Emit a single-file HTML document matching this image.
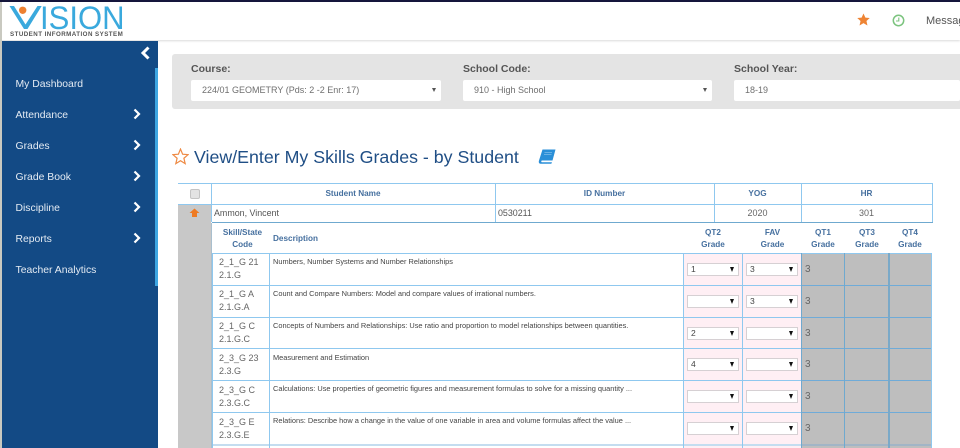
<!DOCTYPE html>
<html><head><meta charset="utf-8">
<style>
html,body{margin:0;padding:0;width:960px;height:448px;overflow:hidden;background:#fff;font-family:"Liberation Sans",sans-serif;color:#555}
.a{position:absolute}
.t{position:absolute;white-space:nowrap}
.nav{position:absolute;left:15.5px;color:#e4ebf3;font-size:10.4px;white-space:nowrap}
.h{position:absolute;background:#8fc8ef}
.g{position:absolute;left:801px;width:131px;height:1px;background:#6fabd8}
.v{position:absolute;background:#8fc8ef;width:1px}
.th{position:absolute;color:#46709f;font-weight:bold;font-size:8.2px;text-align:center;line-height:12px}
.sel{position:absolute;height:11px;background:#fff;border:1px solid #d6d0d3;font-size:8.5px;line-height:11px;color:#444;padding-left:3px;box-sizing:content-box;width:47px}
.sel:after{content:"";position:absolute;right:4px;top:3px;border-left:2.5px solid transparent;border-right:2.5px solid transparent;border-top:5px solid #111}
.code{position:absolute;left:219px;font-size:9px;line-height:13px;color:#666}
.desc{position:absolute;left:273px;font-size:7.4px;color:#444;white-space:nowrap}
.q{position:absolute;left:805px;font-size:10px;color:#666}
.lab{position:absolute;top:63px;font-size:10.5px;font-weight:bold;color:#555}
.box{position:absolute;top:80px;height:21px;background:#fff;border-radius:2px;font-size:9px;line-height:21px;color:#6f6f6f;box-sizing:border-box;padding-left:11px}
.arr{position:absolute;right:5px;top:8px;border-left:2.5px solid transparent;border-right:2.5px solid transparent;border-top:4px solid #555}
</style></head><body>
<div class="a" style="left:0;top:0;width:960px;height:2px;background:#15163c"></div>
<div class="a" style="left:0;top:2px;width:960px;height:38px;background:#fff;box-shadow:0 1px 2px rgba(0,0,0,.15)"></div>
<div class="a" style="left:0;top:2px;width:2px;height:446px;background:#c9c9c0"></div>

<!-- logo -->
<svg class="a" style="left:0;top:0" width="60" height="42" viewBox="0 0 60 42">
<path d="M9.5 6 L14 6 L25.5 24.5 L37.5 6 L41.7 6 L27.5 29 L24 29 Z" fill="#3aa9dd"/>
<circle cx="22.7" cy="10.3" r="3.7" fill="#ee8030"/>
</svg>
<div class="t" style="left:40px;top:0;font-size:32px;line-height:36px;color:#3aa9dd;transform-origin:0 0;transform:scaleX(.97)">ISION</div>
<div class="t" style="left:10px;top:31px;font-size:6.2px;font-weight:bold;color:#555;letter-spacing:.46px">STUDENT INFORMATION SYSTEM</div>

<!-- top right -->
<svg class="a" style="left:857px;top:13px" width="13" height="13" viewBox="0 0 24 24"><path d="M12 1 L15.5 8.5 L23.5 9.3 L17.5 14.8 L19.3 23 L12 18.8 L4.7 23 L6.5 14.8 L.5 9.3 L8.5 8.5 Z" fill="#ee8434"/></svg>
<svg class="a" style="left:892px;top:14px" width="13" height="13" viewBox="0 0 13 13"><circle cx="6.5" cy="6.5" r="5.2" fill="none" stroke="#7cc47f" stroke-width="1.5"/><path d="M6.8 3.5V7H4" fill="none" stroke="#7cc47f" stroke-width="1.1"/></svg>
<div class="t" style="left:926px;top:15px;font-size:11px;color:#555">Messag</div>

<!-- sidebar -->
<div class="a" style="left:2px;top:41px;width:156px;height:407px;background:#134a85"></div>
<div class="a" style="left:155px;top:68px;width:3px;height:218px;background:#3ea6e2"></div>
<svg class="a" style="left:140px;top:46px" width="11" height="14" viewBox="0 0 11 14"><path d="M8.5 1.5 L3 7 L8.5 12.5" fill="none" stroke="#fff" stroke-width="3"/></svg>
<div class="nav" style="top:79px">My Dashboard</div>
<div class="nav" style="top:110px">Attendance</div>
<div class="nav" style="top:141px">Grades</div>
<div class="nav" style="top:172px">Grade Book</div>
<div class="nav" style="top:203px">Discipline</div>
<div class="nav" style="top:234px">Reports</div>
<div class="nav" style="top:265px">Teacher Analytics</div>
<svg class="a" style="left:132px;top:108px" width="9" height="12" viewBox="0 0 9 12"><path d="M2.5 1.5 L7 6 L2.5 10.5" fill="none" stroke="#fff" stroke-width="2.2"/></svg>
<svg class="a" style="left:132px;top:139px" width="9" height="12" viewBox="0 0 9 12"><path d="M2.5 1.5 L7 6 L2.5 10.5" fill="none" stroke="#fff" stroke-width="2.2"/></svg>
<svg class="a" style="left:132px;top:170px" width="9" height="12" viewBox="0 0 9 12"><path d="M2.5 1.5 L7 6 L2.5 10.5" fill="none" stroke="#fff" stroke-width="2.2"/></svg>
<svg class="a" style="left:132px;top:201px" width="9" height="12" viewBox="0 0 9 12"><path d="M2.5 1.5 L7 6 L2.5 10.5" fill="none" stroke="#fff" stroke-width="2.2"/></svg>
<svg class="a" style="left:132px;top:232px" width="9" height="12" viewBox="0 0 9 12"><path d="M2.5 1.5 L7 6 L2.5 10.5" fill="none" stroke="#fff" stroke-width="2.2"/></svg>

<!-- filter panel -->
<div class="a" style="left:172px;top:54px;width:788px;height:55px;background:#e4e4e4;border-radius:3px 0 0 3px"></div>
<div class="lab" style="left:191px">Course:</div>
<div class="lab" style="left:463px">School Code:</div>
<div class="lab" style="left:734px">School Year:</div>
<div class="box" style="left:191px;width:250px">224/01 GEOMETRY (Pds: 2 -2 Enr: 17)<span class="arr"></span></div>
<div class="box" style="left:463px;width:249px">910 - High School<span class="arr"></span></div>
<div class="box" style="left:734px;width:226px">18-19</div>

<!-- title -->
<svg class="a" style="left:172px;top:148px" width="17" height="17" viewBox="0 0 24 24"><path d="M12 1.5 L15 8.8 L22.7 9.4 L16.8 14.5 L18.6 22 L12 18 L5.4 22 L7.2 14.5 L1.3 9.4 L9 8.8 Z" fill="none" stroke="#ee8a44" stroke-width="1.7"/></svg>
<div class="t" style="left:194px;top:146px;font-size:17.8px;line-height:22px;color:#1f4e85">View/Enter My Skills Grades - by Student</div>
<svg class="a" style="left:538px;top:149px" width="18" height="15" viewBox="0 0 18 15"><path d="M4.5 .5 H17.5 L14.5 11.5 H4 C3 11.5 3 13.3 4 13.3 H14 L13.3 14.7 H2.5 C.8 14.7 .5 13 1 11.5 Z" fill="#2a8fd8"/><path d="M6.5 3.5H14M6 5.5H13.5" stroke="#a8d4f2" stroke-width=".6"/></svg>

<!-- main table -->
<div class="a" style="left:178px;top:204px;width:33px;height:244px;background:#c8c8c8"></div>
<div class="h" style="left:178px;top:183px;width:755px;height:1px"></div>
<div class="h" style="left:178px;top:204px;width:755px;height:1px"></div>
<div class="a" style="left:212px;top:222px;width:721px;height:1px;background:#6fa9cf"></div>
<div class="v" style="left:211px;top:183px;height:39px"></div>
<div class="v" style="left:495px;top:183px;height:39px"></div>
<div class="v" style="left:714px;top:183px;height:39px"></div>
<div class="v" style="left:801px;top:183px;height:39px"></div>
<div class="v" style="left:932px;top:183px;height:39px"></div>
<div class="a" style="left:190px;top:189px;width:8px;height:8px;background:#e3e3e3;border:1px solid #c4c4c4;border-radius:2px"></div>
<div class="th" style="left:211px;top:188px;width:284px">Student Name</div>
<div class="th" style="left:495px;top:188px;width:219px">ID Number</div>
<div class="th" style="left:714px;top:188px;width:87px">YOG</div>
<div class="th" style="left:801px;top:188px;width:131px">HR</div>
<svg class="a" style="left:189px;top:208px" width="11" height="10" viewBox="0 0 11 10"><path d="M5.5 .5 L10.5 5 H8 V9 H3 V5 H.5 Z" fill="#ee7a22"/></svg>
<div class="t" style="left:214px;top:208px;font-size:8.9px;color:#555">Ammon, Vincent</div>
<div class="t" style="left:498px;top:208px;font-size:8.9px;color:#555">0530211</div>
<div class="t" style="left:714px;top:208px;width:87px;text-align:center;font-size:9px;color:#666">2020</div>
<div class="t" style="left:801px;top:208px;width:131px;text-align:center;font-size:9px;color:#666">301</div>

<!-- sub header -->
<div class="th" style="left:215px;top:227px;width:55px">Skill/State<br>Code</div>
<div class="th" style="left:273px;top:233px">Description</div>
<div class="th" style="left:684px;top:227px;width:58px">QT2<br>Grade</div>
<div class="th" style="left:743px;top:227px;width:59px">FAV<br>Grade</div>
<div class="th" style="left:801px;top:227px;width:44px">QT1<br>Grade</div>
<div class="th" style="left:845px;top:227px;width:44px">QT3<br>Grade</div>
<div class="th" style="left:888px;top:227px;width:44px">QT4<br>Grade</div>

<!-- cells background -->
<div class="a" style="left:684px;top:254px;width:117px;height:194px;background:#ffeff4"></div>
<div class="a" style="left:801px;top:254px;width:131px;height:194px;background:#bebebe"></div>

<!-- grid -->
<div class="h" style="left:212px;top:253px;width:720px;height:1px"></div>
<div class="h" style="left:212px;top:285px;width:720px;height:1px"></div>
<div class="h" style="left:212px;top:317px;width:720px;height:1px"></div>
<div class="h" style="left:212px;top:348px;width:720px;height:1px"></div>
<div class="h" style="left:212px;top:380px;width:720px;height:1px"></div>
<div class="h" style="left:212px;top:412px;width:720px;height:1px"></div>
<div class="g" style="top:285px"></div>
<div class="g" style="top:317px"></div>
<div class="g" style="top:348px"></div>
<div class="g" style="top:380px"></div>
<div class="g" style="top:412px"></div>
<div class="h" style="left:212px;top:444px;width:589px;height:2px;background:#c4ddf0"></div>
<div class="h" style="left:801px;top:444px;width:131px;height:2px;background:#a2b5c6"></div>
<div class="a" style="left:211px;top:223px;width:1px;height:225px;background:#a9bfce"></div>
<div class="v" style="left:212px;top:253px;height:195px"></div>
<div class="v" style="left:269px;top:253px;height:195px"></div>
<div class="v" style="left:683px;top:253px;height:195px"></div>
<div class="v" style="left:742px;top:253px;height:195px"></div>
<div class="v" style="left:801px;top:253px;height:195px;background:#6fa9cf"></div>
<div class="v" style="left:844px;top:253px;height:195px;background:#6fa9cf"></div>
<div class="v" style="left:888px;top:253px;height:195px;width:2px;background:#7aa9c8"></div>
<div class="v" style="left:931px;top:253px;height:195px"></div>

<!-- rows -->
<div class="code" style="top:256px">2_1_G 21<br>2.1.G</div>
<div class="desc" style="top:257px">Numbers, Number Systems and Number Relationships</div>
<div class="sel" style="left:687px;top:263px">1</div><div class="sel" style="left:746px;top:263px">3</div><div class="q" style="top:264px">3</div>

<div class="code" style="top:288px">2_1_G A<br>2.1.G.A</div>
<div class="desc" style="top:289px">Count and Compare Numbers: Model and compare values of irrational numbers.</div>
<div class="sel" style="left:687px;top:295px"></div><div class="sel" style="left:746px;top:295px">3</div><div class="q" style="top:296px">3</div>

<div class="code" style="top:320px">2_1_G C<br>2.1.G.C</div>
<div class="desc" style="top:321px">Concepts of Numbers and Relationships: Use ratio and proportion to model relationships between quantities.</div>
<div class="sel" style="left:687px;top:327px">2</div><div class="sel" style="left:746px;top:327px"></div><div class="q" style="top:328px">3</div>

<div class="code" style="top:352px">2_3_G 23<br>2.3.G</div>
<div class="desc" style="top:352.5px">Measurement and Estimation</div>
<div class="sel" style="left:687px;top:358px">4</div><div class="sel" style="left:746px;top:358px"></div><div class="q" style="top:359px">3</div>

<div class="code" style="top:384px">2_3_G C<br>2.3.G.C</div>
<div class="desc" style="top:384px">Calculations: Use properties of geometric figures and measurement formulas to solve for a missing quantity ...</div>
<div class="sel" style="left:687px;top:390px"></div><div class="sel" style="left:746px;top:390px"></div><div class="q" style="top:391px">3</div>

<div class="code" style="top:416px">2_3_G E<br>2.3.G.E</div>
<div class="desc" style="top:416px">Relations: Describe how a change in the value of one variable in area and volume formulas affect the value ...</div>
<div class="sel" style="left:687px;top:422px"></div><div class="sel" style="left:746px;top:422px"></div><div class="q" style="top:423px">3</div>
</body></html>
